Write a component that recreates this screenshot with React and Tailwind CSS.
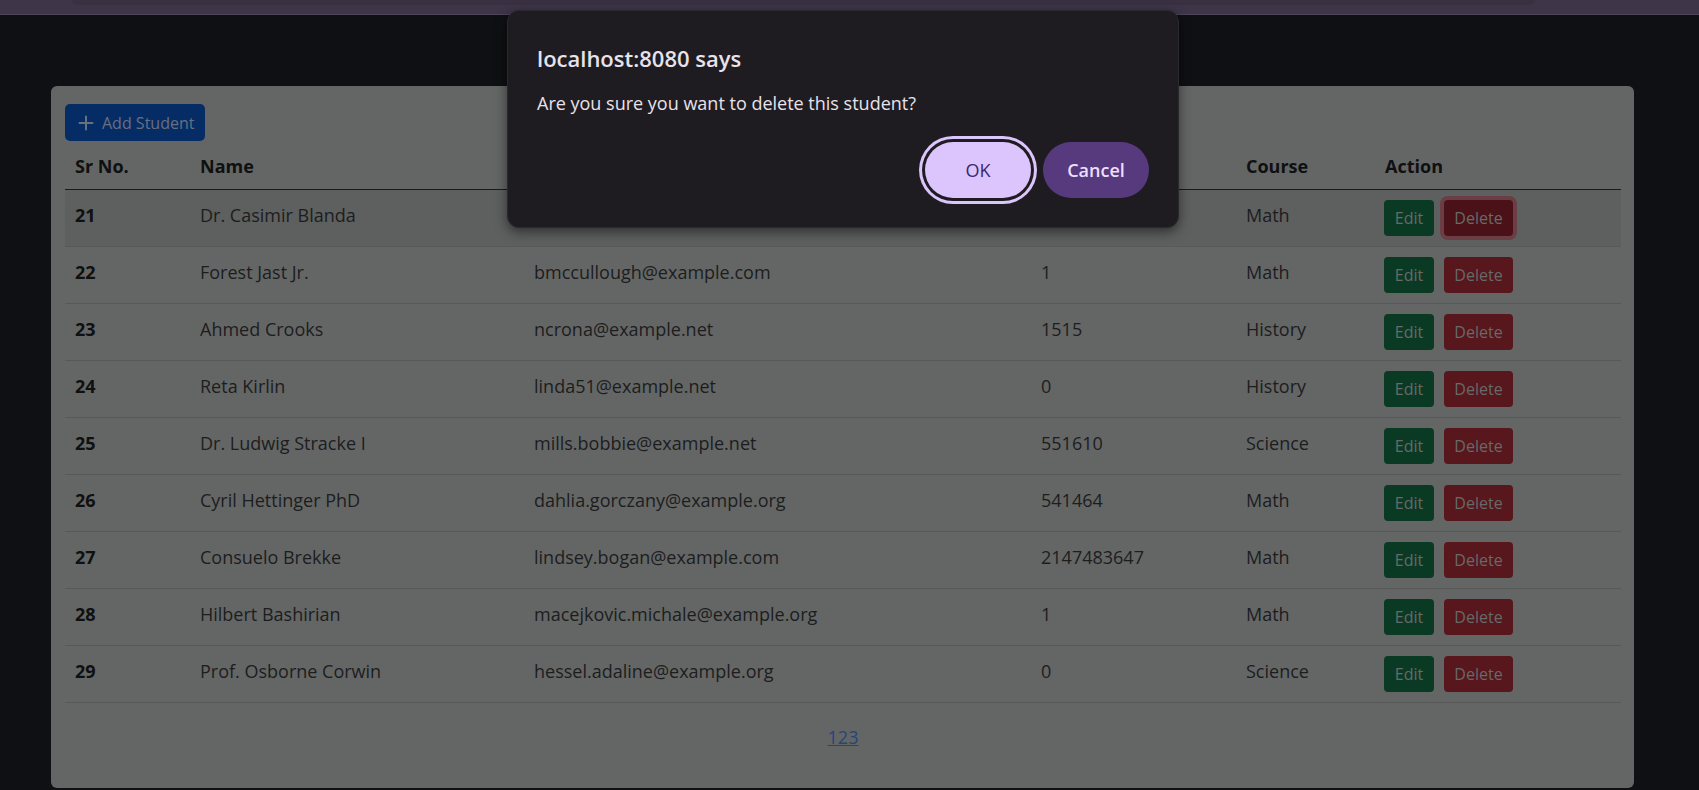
import React from "react";

const rows = [
  { n: 21, name: "Dr. Casimir Blanda", email: "ypurdy@example.com", phone: "0", course: "Math", active: true },
  { n: 22, name: "Forest Jast Jr.", email: "bmccullough@example.com", phone: "1", course: "Math" },
  { n: 23, name: "Ahmed Crooks", email: "ncrona@example.net", phone: "1515", course: "History" },
  { n: 24, name: "Reta Kirlin", email: "linda51@example.net", phone: "0", course: "History" },
  { n: 25, name: "Dr. Ludwig Stracke I", email: "mills.bobbie@example.net", phone: "551610", course: "Science" },
  { n: 26, name: "Cyril Hettinger PhD", email: "dahlia.gorczany@example.org", phone: "541464", course: "Math" },
  { n: 27, name: "Consuelo Brekke", email: "lindsey.bogan@example.com", phone: "2147483647", course: "Math" },
  { n: 28, name: "Hilbert Bashirian", email: "macejkovic.michale@example.org", phone: "1", course: "Math" },
  { n: 29, name: "Prof. Osborne Corwin", email: "hessel.adaline@example.org", phone: "0", course: "Science" },
];

const cols = "grid grid-cols-[125px_334px_507px_205px_139px_1fr]";

export default function App() {
  return (
    <div
      className="relative w-full h-[790px] overflow-hidden bg-[#0f1013]"
      style={{ fontFamily: '"Open Sans", "Noto Sans", sans-serif' }}
    >
      {/* top bar */}
      <div className="h-[15px] bg-[#3e3549] border-b border-[#4e4658] pl-[72px]">
        <div className="w-[1463px] h-[5px] bg-[#393041] rounded-b-[8px]" />
      </div>

      {/* card */}
      <div className="mt-[71px] ml-[51px] w-[1583px] h-[702px] rounded-[6px] bg-[#646665] pl-[14px] pr-[13px] pt-[18px]">
        <button className="flex items-center h-[37px] w-[140px] rounded-[5px] bg-[#052c65] pl-[13px] text-[#687080] text-[16px]">
          <svg width="16" height="16" viewBox="0 0 16 16" className="mr-[8px]">
            <path d="M8 1.5v13M1.5 8h13" stroke="#687080" strokeWidth="2" strokeLinecap="round" />
          </svg>
          Add Student
        </button>

        <div className="mt-[4px]">
          <div className={`${cols} h-[45px] items-center pb-[2px] border-b border-[#1a1a1a] text-[#0f1011] font-bold text-[18px]`}>
            <div className="pl-[10px]">Sr No.</div>
            <div className="pl-[10px]">Name</div>
            <div className="pl-[10px]">Email</div>
            <div className="pl-[10px]">Phone</div>
            <div className="pl-[10px]">Course</div>
            <div className="pl-[10px]">Action</div>
          </div>
          {rows.map((r) => (
            <div
              key={r.n}
              className={`${cols} h-[57px] items-center border-b border-[#575857] text-[18px] leading-[24px] text-[#1c1d1e] ${r.active ? "bg-[#5e5f5f]" : ""}`}
            >
              <div className="pl-[10px] pb-[6px] font-bold text-[#0f1011]">{r.n}</div>
              <div className="pl-[10px] pb-[6px]">{r.name}</div>
              <div className="pl-[10px] pb-[6px]">{r.email}</div>
              <div className="pl-[10px] pb-[6px]">{r.phone}</div>
              <div className="pl-[10px] pb-[6px]">{r.course}</div>
              <div className="pl-[9px] flex items-center gap-[10px]">
                <button className="h-[36px] w-[50px] rounded-[4px] bg-[#0a3a24] text-[#666a68] text-[16px]">Edit</button>
                <button
                  className={`h-[36px] w-[69px] rounded-[4px] text-[#666a68] text-[16px] ${
                    r.active ? "bg-[#4a1118] ring-4 ring-[#6b3d44]" : "bg-[#58161d]"
                  }`}
                >
                  Delete
                </button>
              </div>
            </div>
          ))}
          <div className="mt-[22px] flex justify-center">
            <span className="text-[18px] leading-[24px] text-[#24457a] underline">123</span>
          </div>
        </div>
      </div>

      {/* dialog */}
      <div className="absolute left-[507px] top-[10px] w-[672px] h-[218px] rounded-[12px] bg-[#1f1c21] border border-[#2b282e] shadow-[0_4px_12px_rgba(0,0,0,0.5)] px-[29px] pt-[32px]">
        <div className="text-[22px] font-semibold leading-[30px] text-[#e8e2ea]">localhost:8080 says</div>
        <div className="mt-[18px] text-[18px] leading-[24px] text-[#e8e2ea]">Are you sure you want to delete this student?</div>
        <div className="mt-[27px] flex justify-end gap-[12px]">
          <button className="h-[56px] w-[106px] rounded-full bg-[#dcc5fc] text-[#3b2770] text-[18px] font-medium shadow-[0_0_0_3px_#1f1c21,0_0_0_6px_#dcc5fc]">
            OK
          </button>
          <button className="h-[56px] w-[106px] rounded-full bg-[#573a7d] text-[#ecdfff] text-[18px] font-semibold">
            Cancel
          </button>
        </div>
      </div>
    </div>
  );
}
